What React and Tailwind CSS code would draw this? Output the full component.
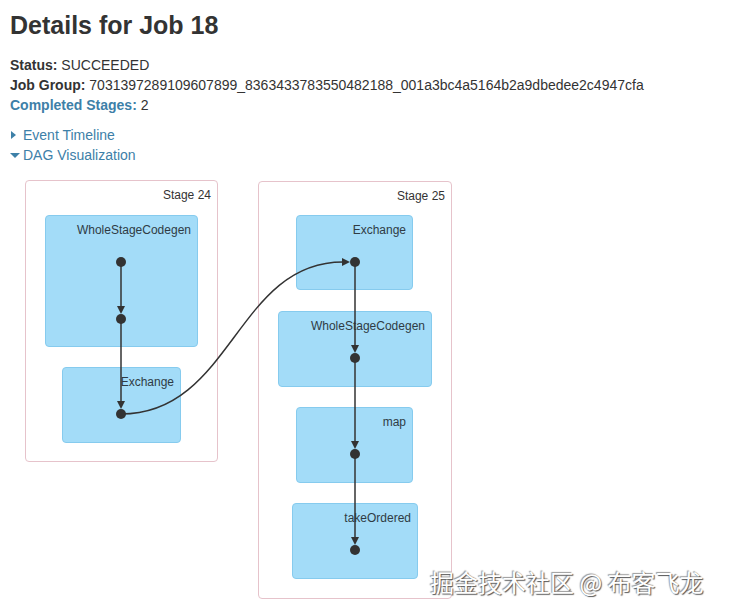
import React from "react";

const linkColor = "text-[#3d80a8]";

// DAG nodes (canvas coords)
const stages = [
  { id: 24, left: 25, top: 0, w: 193, h: 282 },
  { id: 25, left: 258, top: 1, w: 194, h: 418 },
];

const nodes = [
  { label: "WholeStageCodegen", left: 45, top: 35, w: 153, h: 132 },
  { label: "Exchange", left: 62, top: 187, w: 119, h: 76 },
  { label: "Exchange", left: 296, top: 35, w: 117, h: 75 },
  { label: "WholeStageCodegen", left: 278, top: 131, w: 154, h: 76 },
  { label: "map", left: 296, top: 227, w: 117, h: 76 },
  { label: "takeOrdered", left: 292, top: 323, w: 126, h: 76 },
];

const dots = [
  [121, 82],
  [121, 139],
  [121, 234],
  [355, 82],
  [355, 178],
  [355, 274],
  [355, 370],
];

function DownArrow({ x, y1, y2 }) {
  // y2 = dot center
  const tip = y2 - 5;
  return (
    <g>
      <line x1={x} y1={y1} x2={x} y2={tip - 4} stroke="#333" strokeWidth="1.5" />
      <polygon points={`${x - 4},${tip - 8} ${x + 4},${tip - 8} ${x},${tip}`} fill="#333" />
    </g>
  );
}

function DagViz() {
  return (
    <div className="relative w-[460px] h-[420px] mt-[15px]">
      {stages.map((s) => (
        <div
          key={s.id}
          className="absolute border border-[#e6c3cb] rounded-[4px] bg-white"
          style={{ left: s.left, top: s.top, width: s.w, height: s.h }}
        >
          <div className="text-right pr-[6px] pt-[7px] text-[12px] leading-[14px] text-[#333]">
            Stage {s.id}
          </div>
        </div>
      ))}
      {nodes.map((n, i) => (
        <div
          key={i}
          className="absolute bg-[#a3dcf8] border border-[#86cbee] rounded-[4px]"
          style={{ left: n.left, top: n.top, width: n.w, height: n.h }}
        >
          <div className="text-right pr-[6px] pt-[7px] text-[12px] leading-[14px] text-[#2f3b44]">
            {n.label}
          </div>
        </div>
      ))}
      <svg className="absolute left-0 top-0" width="460" height="420">
        <DownArrow x={121} y1={82} y2={139} />
        <DownArrow x={121} y1={139} y2={234} />
        <DownArrow x={355} y1={82} y2={178} />
        <DownArrow x={355} y1={178} y2={274} />
        <DownArrow x={355} y1={274} y2={370} />
        <path d="M121 234 C 232 234 236 82 343 82" fill="none" stroke="#333" strokeWidth="1.5" />
        <polygon points="342,78 350,82 342,86" fill="#333" />
        {dots.map(([x, y], i) => (
          <circle key={i} cx={x} cy={y} r="5" fill="#333" />
        ))}
      </svg>
    </div>
  );
}

export default function App() {
  return (
    <div className="relative w-[729px] h-[616px] bg-white overflow-hidden font-['Liberation_Sans',Arial,sans-serif] text-[#333]">
      <div className="pl-[10px] pt-[11px]">
        <h1 className="text-[25px] leading-[28px] font-bold text-[#333]">Details for Job 18</h1>
        <ul className="mt-[16px] text-[14px] leading-[20px]">
          <li>
            <strong>Status:</strong> SUCCEEDED
          </li>
          <li>
            <strong>Job Group:</strong> 7031397289109607899_8363433783550482188_001a3bc4a5164b2a9dbedee2c4947cfa
          </li>
          <li>
            <strong className={linkColor}>Completed Stages:</strong> 2
          </li>
        </ul>
        <div className={`mt-[10px] text-[14px] leading-[20px] ${linkColor}`}>
          <div className="flex items-center gap-[6px]">
            <svg width="7" height="10" viewBox="0 0 7 10">
              <polygon points="1,1 6,5 1,9" fill="#3d80a8" />
            </svg>
            <span>Event Timeline</span>
          </div>
          <div className="flex items-center gap-[3px]">
            <svg width="10" height="7" viewBox="0 0 10 7">
              <polygon points="0,1 10,1 5,6" fill="#3d80a8" />
            </svg>
            <span>DAG Visualization</span>
          </div>
        </div>
      </div>
      <DagViz />
      <div className="absolute left-[430px] top-[567px] whitespace-nowrap text-[24px] leading-[30px] text-white font-['Noto_Sans_CJK_SC',sans-serif] [text-shadow:1px_1px_1px_#555,-1px_-1px_1px_#999]">
        掘金技术社区 @ 布客飞龙
      </div>
    </div>
  );
}
